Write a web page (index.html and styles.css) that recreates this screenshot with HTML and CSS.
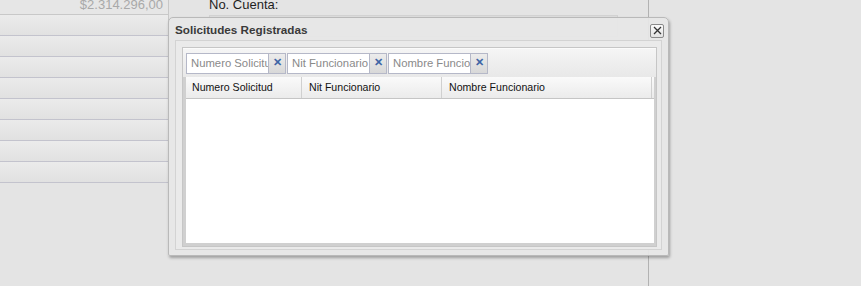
FILE: index.html
```html
<!DOCTYPE html>
<html lang="es">
<head>
    <meta charset="UTF-8">
    <title>Solicitudes Registradas</title>
    <link rel="stylesheet" href="styles.css">
</head>
<body>
    <div class="page">
        <!-- formulario de fondo -->
        <div class="col-left">
            <div class="row first"><span class="amount">$2.314.296,00</span></div>
            <div class="row"></div>
            <div class="row"></div>
            <div class="row"></div>
            <div class="row"></div>
            <div class="row"></div>
            <div class="row"></div>
            <div class="row"></div>
            <div class="row"></div>
        </div>
        <div class="col-mid">
            <div class="label">No. Cuenta:</div>
            <div class="field"></div>
        </div>
        <div class="col-right"></div>

        <!-- ventana -->
        <div class="win">
            <div class="win-head">
                <span class="win-title">Solicitudes Registradas</span>
                <span class="win-close">
                    <svg width="11" height="11" viewBox="0 0 11 11"><path d="M2 2 L9 9 M9 2 L2 9" stroke="#333" stroke-width="1.3"/></svg>
                </span>
            </div>
            <div class="win-body">
                <div class="panel">
                    <div class="tbar">
                        <div class="tag"><span class="tag-text">Numero Solicitud</span><span class="tag-x">✕</span></div>
                        <div class="tag"><span class="tag-text">Nit Funcionario</span><span class="tag-x">✕</span></div>
                        <div class="tag"><span class="tag-text">Nombre Funcionario</span><span class="tag-x">✕</span></div>
                    </div>
                    <div class="grid-wrap">
                        <div class="grid">
                            <div class="grid-head">
                                <div class="hcol c1">Numero Solicitud</div>
                                <div class="hcol c2">Nit Funcionario</div>
                                <div class="hcol c3">Nombre Funcionario</div>
                            </div>
                            <div class="grid-body"></div>
                        </div>
                    </div>
                </div>
            </div>
        </div>
    </div>
</body>
</html>
```

FILE: styles.css
```css
* {
    margin: 0;
    padding: 0;
    box-sizing: border-box;
}
body {
    font-family: 'Liberation Sans', Arial, sans-serif;
    background: #e4e4e4;
    width: 861px;
    height: 286px;
    overflow: hidden;
}
.page {
    position: relative;
    display: flex;
    height: 286px;
}
.col-left {
    width: 169px;
    flex-shrink: 0;
}
.row {
    height: 21px;
    border-bottom: 1px solid #c3c3cd;
    border-right: 1px solid #c8c8c8;
    background: linear-gradient(#ebebeb, #e1e1e1);
}
.row.first {
    height: 15px;
    background: #e6e6e6;
    border-bottom-color: #c8c8c8;
    text-align: right;
    padding-right: 5px;
    overflow: hidden;
}
.amount {
    display: block;
    font-size: 13px;
    line-height: 13px;
    margin-top: -2px;
    color: #a9a9a9;
}
.col-mid {
    width: 479px;
    flex-shrink: 0;
    padding-left: 40px;
}
.label {
    font-size: 13px;
    line-height: 13px;
    margin-top: -2px;
    color: #1e1e1e;
    height: 17px;
}
.field {
    width: 409px;
    height: 22px;
    border: 1px solid #d2d2d2;
    background: #dedede;
}
.col-right {
    flex: 1;
    border-left: 1px solid #b2b2b2;
}

/* ventana */
.win {
    position: absolute;
    left: 168px;
    top: 17px;
    width: 501px;
    border: 1px solid #b9b9b9;
    border-radius: 5px 5px 2px 2px;
    background: rgba(231, 231, 231, 0.92);
    box-shadow: 1px 2px 3px rgba(0, 0, 0, 0.3);
}
.win-head {
    height: 22px;
    display: flex;
    align-items: center;
    justify-content: space-between;
    padding: 0 4px 0 6px;
}
.win-title {
    font-size: 11.7px;
    font-weight: bold;
    color: #3a3a3a;
    margin-top: 1px;
}
.win-close {
    width: 14px;
    height: 14px;
    border: 1px solid #8a8a8a;
    border-radius: 2px;
    background: linear-gradient(#fafafa, #e2e2e2);
    display: flex;
    align-items: center;
    justify-content: center;
    margin-top: 3px;
}
.win-body {
    margin: 0 6px 5px 6px;
    border: 1px solid #d3d3d3;
    padding: 6px 4px 2px 6px;
    background: #eaeaea;
}
.panel {
    border: 1px solid #c6c6c6;
    background: #d0d0d0;
}
.tbar {
    height: 29px;
    padding: 4px 3px;
    display: flex;
    gap: 1px;
    background: linear-gradient(#f5f5f5, #e8e8e8);
    border-top: 1px solid #fbfbfb;
}
.tag {
    display: flex;
    height: 21px;
    border: 1px solid #b5b8c8;
}
.tag-text {
    width: 81px;
    background: #fff;
    font-size: 11.3px;
    line-height: 19px;
    padding-left: 4px;
    color: #8a8a8a;
    white-space: nowrap;
    overflow: hidden;
}
.tag-x {
    width: 17px;
    border-left: 1px solid #b5b8c8;
    background: linear-gradient(#ececec, #d8d8d8);
    color: #3d66a6;
    font-size: 11px;
    font-weight: bold;
    text-align: center;
    line-height: 16px;
}
.grid-wrap {
    padding: 0 2px 3px 3px;
}
.grid {
    background: #fff;
}
.grid-head {
    display: flex;
    height: 22px;
    border-bottom: 1px solid #c5c5c5;
    background: linear-gradient(#fafafa, #ebebeb);
}
.hcol {
    font-size: 10.6px;
    line-height: 21px;
    color: #111;
    padding-left: 6px;
    border-right: 1px solid #d0d0d0;
}
.c1 { width: 116px; }
.c2 { width: 140px; padding-left: 7px; }
.c3 { width: 210px; padding-left: 7px; }
.grid-body {
    height: 144px;
}
```
